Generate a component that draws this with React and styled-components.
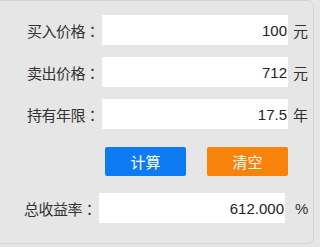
import React from "react";
import styled, { createGlobalStyle } from "styled-components";

const Global = createGlobalStyle`
  html, body { margin: 0; padding: 0; background: #e6e6e6; }
  body { font-family: "Liberation Sans", "Noto Sans CJK SC", sans-serif; }
`;

const Panel = styled.div`
  box-sizing: border-box;
  width: 314px;
  height: 244px;
  border: 1px solid #d6d6d6;
  border-left: none;
  border-radius: 0 6px 6px 0;
  padding-top: 14px;
  display: flex;
  flex-direction: column;
`;

const Row = styled.div`
  display: flex;
  align-items: center;
  height: 30px;
  margin-top: ${(p) => p.$gap || 0}px;
  margin-left: ${(p) => p.$shift || 0}px;
`;

const Label = styled.div`
  box-sizing: border-box;
  width: 102px;
  padding-right: 2px;
  text-align: right;
  font-family: "Noto Sans CJK SC", sans-serif;
  font-size: 15px;
  color: #333;
  letter-spacing: -0.5px;
  white-space: nowrap;
`;

const Colon = styled.span`
  display: inline-block;
  width: 15px;
  text-align: center;
  font-family: "Noto Sans CJK TC", sans-serif;
  letter-spacing: 0;
`;

const Field = styled.div`
  box-sizing: border-box;
  width: 186px;
  height: 30px;
  background: #fff;
  display: flex;
  align-items: center;
  justify-content: flex-end;
  padding-right: 1px;
  font-family: "Liberation Sans", sans-serif;
  font-size: 15px;
  color: #222;
`;

const Unit = styled.span`
  margin-left: ${(p) => p.$gap || 5}px;
  font-family: ${(p) => (p.$latin ? '"Liberation Sans", sans-serif' : '"Noto Sans CJK SC", sans-serif')};
  font-size: 15px;
  color: #333;
`;

const Buttons = styled.div`
  display: flex;
  gap: 21px;
  margin-top: 18px;
  padding-left: 105px;
`;

const Button = styled.button`
  width: 81px;
  height: 29px;
  border: none;
  border-radius: 2px;
  background: ${(p) => p.$bg};
  color: #fff;
  font-family: "Noto Sans CJK SC", sans-serif;
  font-size: 15px;
  padding: 0;
  cursor: pointer;
`;

const rows = [
  { label: "买入价格", value: "100", unit: "元" },
  { label: "卖出价格", value: "712", unit: "元" },
  { label: "持有年限", value: "17.5", unit: "年" },
];

export default function App() {
  return (
    <>
      <Global />
      <Panel>
        {rows.map((r, i) => (
          <Row key={r.label} $gap={i === 0 ? 0 : 12}>
            <Label>
              {r.label}
              <Colon>：</Colon>
            </Label>
            <Field>{r.value}</Field>
            <Unit>{r.unit}</Unit>
          </Row>
        ))}
        <Buttons>
          <Button $bg="#0f7bf2">计算</Button>
          <Button $bg="#f7820c">清空</Button>
        </Buttons>
        <Row $gap={17} $shift={-3}>
          <Label>
            总收益率
            <Colon>：</Colon>
          </Label>
          <Field>612.000</Field>
          <Unit $latin $gap={10}>%</Unit>
        </Row>
      </Panel>
    </>
  );
}
